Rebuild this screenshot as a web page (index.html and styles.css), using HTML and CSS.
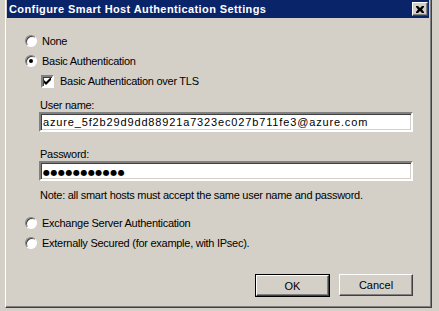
FILE: index.html
```html
<!DOCTYPE html>
<html lang="en">
<head>
    <meta charset="UTF-8">
    <title>Configure Smart Host Authentication Settings</title>
    <link rel="stylesheet" href="styles.css">
</head>
<body>
    <div class="window">
        <div class="titlebar">
            <span class="title">Configure Smart Host Authentication Settings</span>
            <span class="close">
                <svg width="8" height="7" viewBox="0 0 8 7"><path d="M0 0h2l2 2 2-2h2v1L6 3.5 8 6v1H6L4 5 2 7H0V6l2-2.5L0 1z" fill="#000"/></svg>
            </span>
        </div>

        <div class="content">
            <div class="row"><span class="radio"></span><span>None</span></div>
            <div class="row"><span class="radio checked"></span><span>Basic Authentication</span></div>

            <div class="sub">
                <div class="row check-row">
                    <span class="checkbox">
                        <svg width="7" height="7" viewBox="0 0 7 7"><path d="M0 2v3l2 2 5-5V-1L2 4z" fill="#000"/></svg>
                    </span>
                    <span>Basic Authentication over TLS</span>
                </div>

                <div class="field-label">User name:</div>
                <div class="field">azure_5f2b29d9dd88921a7323ec027b711fe3@azure.com</div>

                <div class="field-label pass-label">Password:</div>
                <div class="field"><span class="dots">●●●●●●●●●●●</span></div>

                <div class="note">Note: all smart hosts must accept the same user name and password.</div>
            </div>

            <div class="row first-low"><span class="radio"></span><span>Exchange Server Authentication</span></div>
            <div class="row"><span class="radio"></span><span>Externally Secured (for example, with IPsec).</span></div>

            <div class="buttons">
                <div class="button default"><span>OK</span></div>
                <div class="button"><span>Cancel</span></div>
            </div>
        </div>
    </div>
</body>
</html>
```

FILE: styles.css
```css
/* Classic dialog */
body {
    margin: 0;
    background-color: #d4d0c8;
    font-family: "Liberation Sans", Arial, sans-serif;
    font-size: 11px;
    letter-spacing: -0.27px;
    color: #000;
}
.window {
    margin-left: 5px;
    width: 422px;
    height: 305px;
    padding: 0 2px 2px 1px;
    border-left: 1px solid #fff;
    border-right: 1px solid #404040;
    border-bottom: 1px solid #404040;
    box-shadow: inset -1px -1px #808080;
}
.titlebar {
    height: 18px;
    background-color: #0a246a;
    display: flex;
    align-items: center;
    justify-content: space-between;
    padding: 0 1px 0 2px;
}
.title {
    color: #fff;
    font-weight: bold;
    font-size: 11px;
    letter-spacing: 0.4px;
}
.close {
    width: 14px;
    height: 12px;
    background: #d4d0c8;
    border: 1px solid;
    border-color: #fff #404040 #404040 #fff;
    box-shadow: inset -1px -1px #808080;
    display: flex;
    align-items: center;
    justify-content: center;
}
.content {
    padding: 13px 16px 0 18px;
}
.row {
    height: 20px;
    display: flex;
    align-items: center;
    gap: 5px;
}
.radio {
    width: 10px;
    height: 10px;
    border-radius: 50%;
    border: 1px solid;
    border-color: #808080 #fff #fff #808080;
    background: #fff;
    box-shadow: inset 1px 1px #404040;
    position: relative;
}
.radio.checked::after {
    content: "";
    position: absolute;
    left: 3px;
    top: 3px;
    width: 4px;
    height: 4px;
    border-radius: 50%;
    background: #000;
}
.sub {
    margin-left: 14px;
}
.check-row {
    margin-left: 2px;
    gap: 6px;
}
.checkbox {
    width: 9px;
    height: 9px;
    border: 2px solid;
    border-color: #808080 #fff #fff #808080;
    box-shadow: inset 1px 1px #404040;
    background: #fff;
    display: flex;
    align-items: center;
    justify-content: center;
}
.field-label {
    margin-top: 7px;
    height: 14px;
    line-height: 14px;
    padding-left: 1px;
}
.pass-label {
    margin-top: 15px;
}
.field {
    height: 16px;
    line-height: 16px;
    background: #fff;
    border: 2px solid;
    border-color: #808080 #fff #fff #808080;
    box-shadow: inset 1px 1px #404040, inset -1px -1px #d4d0c8;
    padding-left: 2px;
    letter-spacing: 0.85px;
    white-space: nowrap;
    overflow: hidden;
}
.dots {
    font-family: "DejaVu Sans", sans-serif;
    font-size: 8px;
    letter-spacing: 0.5px;
}
.note {
    margin-top: 7px;
    height: 14px;
    line-height: 14px;
    padding-left: 1px;
}
.first-low {
    margin-top: 11px;
}
.buttons {
    margin-top: 21px;
    display: flex;
    justify-content: flex-end;
    gap: 9px;
}
.button {
    width: 72px;
    height: 20px;
    border: 1px solid;
    border-color: #fff #404040 #404040 #fff;
    box-shadow: inset -1px -1px #808080;
    display: flex;
    align-items: center;
    justify-content: center;
    letter-spacing: 0;
}
.button.default {
    width: 71px;
    height: 19px;
    outline: 1px solid #000;
    outline-offset: 0;
    margin: 1px;
}
```
